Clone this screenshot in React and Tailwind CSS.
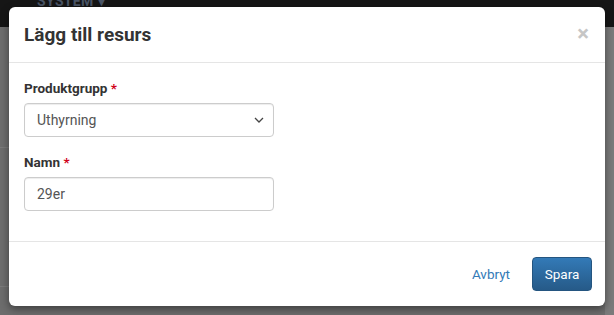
import React from "react";

export default function App() {
  const font = { fontFamily: "Roboto, 'Liberation Sans', sans-serif" };
  return (
    <div
      className="relative w-[614px] h-[315px] overflow-hidden bg-[#6d6d6d]"
      style={font}
    >
      {/* page behind the overlay */}
      <div className="h-[27px] bg-[#161616] flex items-start pl-[37px]">
        <span className="text-[#4a5566] text-[14px] font-bold leading-[14px] -mt-[6px] tracking-wide">
          SYSTEM ▾
        </span>
      </div>
      <div className="absolute left-0 top-[147px] w-[9px] h-px bg-[#7a7a7a]" />
      <div className="absolute left-0 top-[286px] w-[9px] h-px bg-[#7a7a7a]" />
      <div className="absolute right-0 top-[27px] w-[9px] h-[288px] bg-[#7b7b7b]" />

      {/* modal */}
      <div className="absolute left-[9px] top-[7px] w-[596px] h-[299px] bg-white rounded-[6px] shadow-[0_3px_8px_rgba(0,0,0,0.45)] flex flex-col">
        <div className="h-[56px] shrink-0 flex items-center justify-between px-[15px] border-b border-[#e5e5e5]">
          <h4 className="text-[19px] font-bold text-[#333] leading-none">
            Lägg till resurs
          </h4>
          <span className="text-[#c6c6c6] text-[22px] font-bold leading-none -mt-[2px] mr-[1px]">
            ×
          </span>
        </div>

        <div className="shrink-0 px-[15px] pt-[15px] pb-[30px] border-b border-[#e5e5e5] flex flex-col">
          <label className="text-[13.5px] font-bold text-[#333] leading-[20px] mb-[5px]">
            Produktgrupp <span className="text-[#d0021b]">*</span>
          </label>
          <div className="w-[250px] h-[34px] border border-[#ccc] rounded-[4px] shadow-[inset_0_1px_1px_rgba(0,0,0,0.075)] flex items-center justify-between pl-[12px] pr-[9px]">
            <span className="text-[14px] text-[#555]">Uthyrning</span>
            <svg width="10" height="6" viewBox="0 0 10 6">
              <polyline
                points="1,1 5,5 9,1"
                fill="none"
                stroke="#444"
                strokeWidth="1.3"
              />
            </svg>
          </div>

          <label className="text-[13.5px] font-bold text-[#333] leading-[20px] mb-[5px] mt-[15px]">
            Namn <span className="text-[#d0021b]">*</span>
          </label>
          <div className="w-[250px] h-[34px] border border-[#ccc] rounded-[4px] shadow-[inset_0_1px_1px_rgba(0,0,0,0.075)] flex items-center pl-[12px]">
            <span className="text-[14px] text-[#555]">29er</span>
          </div>
        </div>

        <div className="flex-1 flex items-start justify-end gap-[10px] px-[13px] pt-[15px]">
          <button className="h-[34px] px-[12px] text-[13.5px] text-[#337ab7]">
            Avbryt
          </button>
          <button className="h-[34px] w-[60px] rounded-[4px] border border-[#245580] bg-gradient-to-b from-[#337ab7] to-[#265a88] text-white text-[13.5px]">
            Spara
          </button>
        </div>
      </div>
    </div>
  );
}
